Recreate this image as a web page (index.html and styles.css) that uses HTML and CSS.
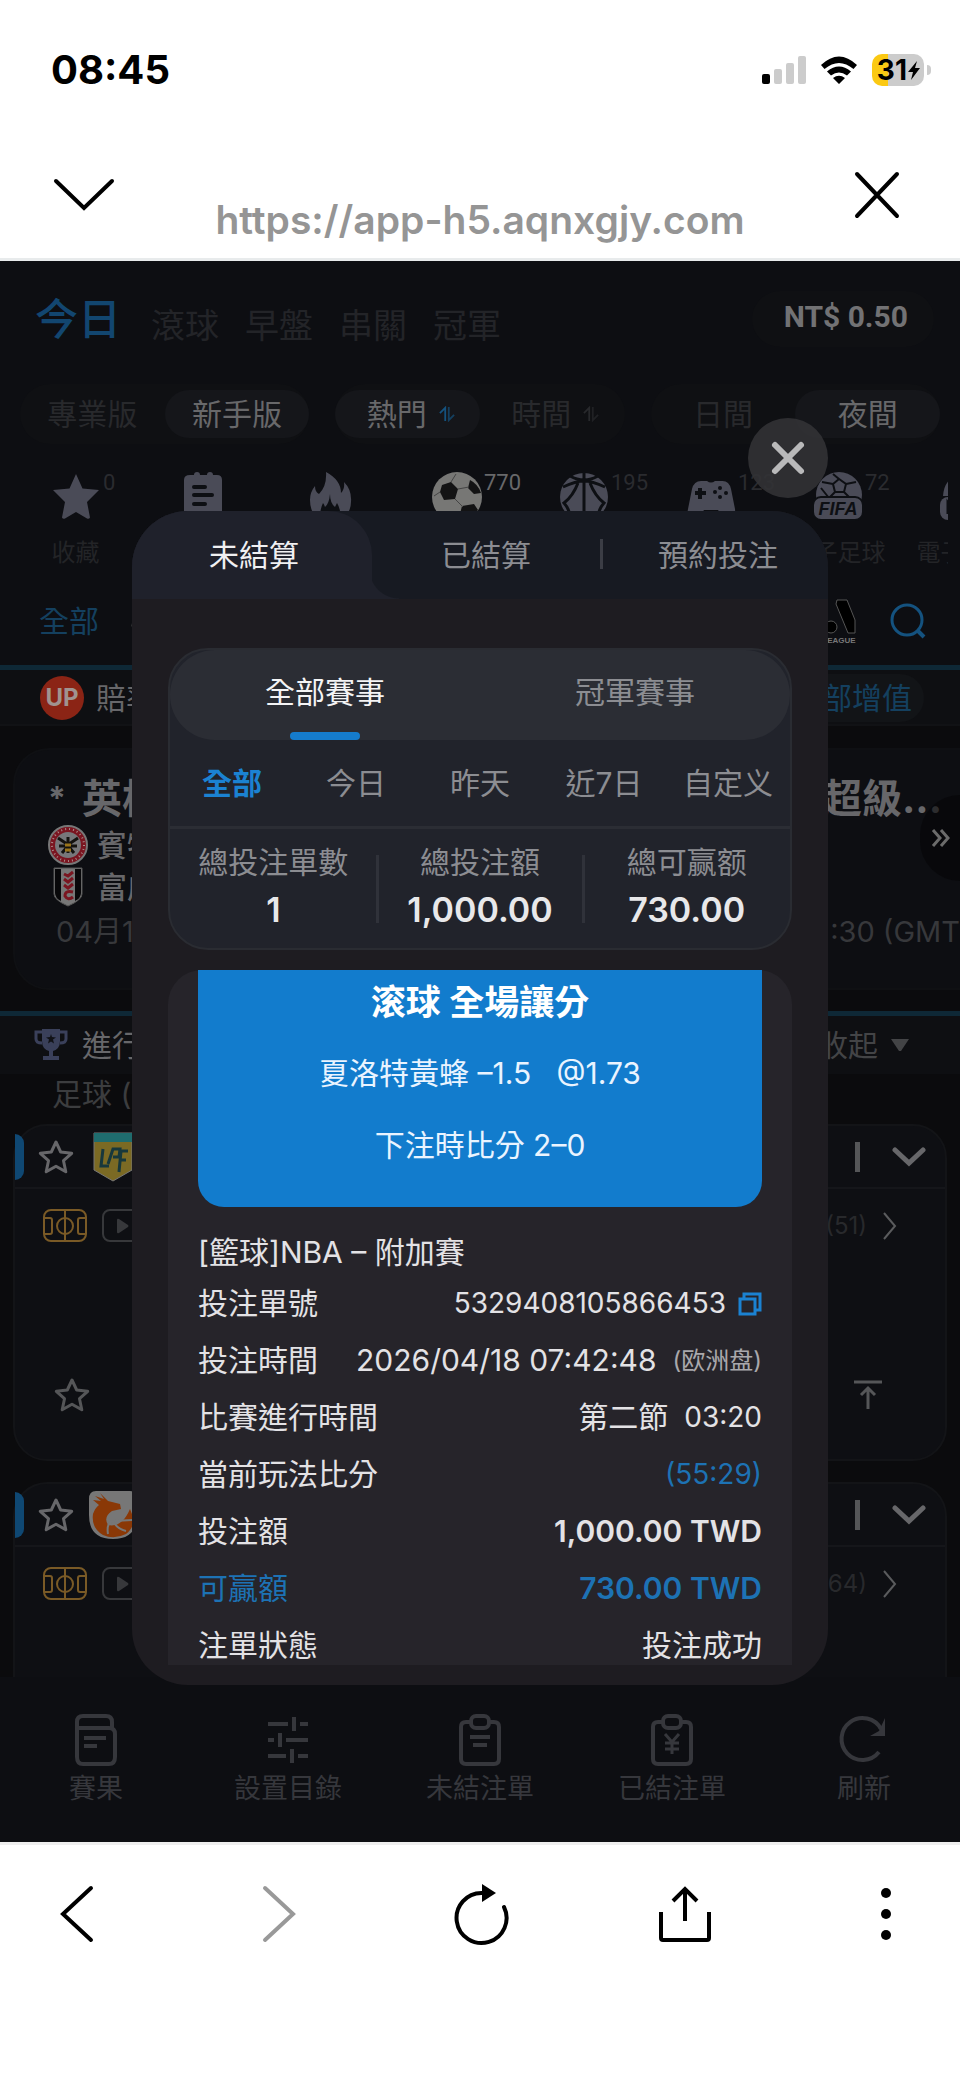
FILE: index.html
```html
<!DOCTYPE html>
<html lang="zh-Hant">
<head>
<meta charset="utf-8">
<meta name="viewport" content="width=device-width, initial-scale=1">
<title>未結注單</title>
<link rel="stylesheet" href="styles.css">
</head>
<body>
<svg class="defs" aria-hidden="true">
  <symbol id="star-line" viewBox="0 0 38 36"><path d="M19 3l4.700 10 11 1.300-8.200 7.400 2.300 11L19 27.200 9.200 32.700l2.300-11L3.300 14.300l11-1.300z" fill="none" stroke="currentColor" stroke-width="3" stroke-linejoin="round"/></symbol>
  <symbol id="pitch" viewBox="0 0 44 34"><g fill="none" stroke="currentColor" stroke-width="2"><rect x="1" y="1" width="42" height="31" rx="7"/><path d="M22 1v31M1 9h6q2 0 2 2v12q0 2-2 2H1M43 9h-6q-2 0-2 2v12q0 2 2 2h6"/><circle cx="22" cy="17" r="8"/></g></symbol>
  <symbol id="play" viewBox="0 0 44 34"><rect x="1" y="1" width="42" height="31" rx="7" fill="none" stroke="currentColor" stroke-width="2"/><path d="M15 11q0-2 2-1l9 6q1 1 0 2l-9 6q-2 1-2-1z" fill="currentColor"/></symbol>
  <symbol id="sort" viewBox="0 0 18 18"><path d="M1 8l6-6v15" fill="none" stroke="currentColor" stroke-width="2"/><path d="M11 1v15l6-6" fill="none" stroke="currentColor" stroke-width="2" opacity=".7"/></symbol>
  <symbol id="down" viewBox="0 0 34 22"><path d="M3 4l14 13L31 4" fill="none" stroke="currentColor" stroke-width="5" stroke-linecap="round"/></symbol>
  <symbol id="next" viewBox="0 0 16 28"><path d="M2 1l11 13L2 27" fill="none" stroke="currentColor" stroke-width="2"/></symbol>
</svg>

<header class="browser-top">
  <div class="status">
    <span class="clock">08:45</span>
    <span class="status-icons">
      <svg width="44" height="28" viewBox="0 0 44 28"><rect y="18" width="8" height="10" rx="2"/><g fill="#ccc"><rect x="12" y="13" width="8" height="15" rx="2"/><rect x="24" y="7" width="8" height="21" rx="2"/><rect x="36" width="8" height="28" rx="2"/></g></svg>
      <svg width="38" height="28" viewBox="0 0 38 28"><path d="M19 28l-6-6q6-4.500 12 0zM1 9l3.500 4q14.500-12 29 0L37 9q-18-17-36 0zM7 15.500l4 4q8-6 16 0l4-4q-12-10-24 0z"/></svg>
      <span class="battery"><b>31</b><svg width="12" height="19" viewBox="0 0 12 19"><path d="M9 0L0 11h5L3 19l9-12H7z"/></svg></span>
    </span>
  </div>
  <div class="address">
    <button class="plain" aria-label="收合"><svg width="62" height="34" viewBox="0 0 62 34"><path d="M3 3l28 27L59 3" fill="none" stroke="#000" stroke-width="4" stroke-linecap="round"/></svg></button>
    <span class="url">https://app-h5.aqnxgjy.com</span>
    <button class="plain" aria-label="關閉"><svg width="48" height="48" viewBox="0 0 48 48"><path d="M4 3l40 42M44 3L4 45" fill="none" stroke="#000" stroke-width="4" stroke-linecap="round"/></svg></button>
  </div>
</header>

<div class="app">
  <main class="page">
    <section class="top">
      <div class="periods">
        <a class="on" href="#">今日</a><a href="#">滾球</a><a href="#">早盤</a><a href="#">串關</a><a href="#">冠軍</a>
        <span class="balance">NT$ 0.50</span>
      </div>
      <div class="switches">
        <div class="switch"><button>專業版</button><button class="on">新手版</button></div>
        <div class="switch sorts"><button class="on">熱門<svg class="blue" width="16" height="16"><use href="#sort"/></svg></button><button>時間<svg width="16" height="16"><use href="#sort"/></svg></button></div>
        <div class="switch"><button>日間</button><button class="on">夜間</button></div>
      </div>
      <div class="sports">
        <a class="sport" href="#"><svg width="48" height="48" viewBox="0 0 48 48"><path d="M24 2l6.500 14.500L47 18 35 30l3 15.500q-1 2-3 1L24 40l-11 6.500q-2 1-3-1L13 30 1 18l16.500-1.500z" fill="currentColor"/></svg><sup>0</sup><span>收藏</span></a>
        <a class="sport" href="#"><svg width="48" height="48" viewBox="0 0 48 48"><path d="M11 3h4q0-3 3-3t3 3h7q0-3 3-3t3 3h4q5 0 5 5v40H5V8q0-5 6-5z" fill="currentColor"/><path d="M15 15h11M15 23h18M15 32h11" stroke="#0d0f13" stroke-width="4" stroke-linecap="round"/></svg></a>
        <a class="sport" href="#"><svg width="48" height="48" viewBox="0 0 48 48"><path d="M20 0q15 8 15 21 4-4 3-11 8 8 7 20 0 11-10 18H15Q4 43 4 28q0-8 5-14 0 6 4 8Q21 14 20 0z" fill="currentColor"/><path d="M24 22q-1 10-5 13-1-3-2-4-4 8-2 17h18q3-9-2-17l-2 4q-5-4-5-13z" fill="#0d0f13"/></svg></a>
        <a class="sport on" href="#"><svg width="50" height="50" viewBox="0 0 50 50"><circle cx="25" cy="25" r="25" fill="#777775"/><g fill="#131314"><path d="M10 13l9-3 7 7-3 10-11 1-4-8zM38 8q8 4 11 13l-7 1-6-6zM30 34l12-2 4 6q-8 11-20 12z"/></g><path d="M26 17l11-2M23 27l8 8M8 20l-6 4M19 10l5-8" stroke="#444" stroke-width="1"/></svg><sup>770</sup></a>
        <a class="sport" href="#"><svg width="48" height="48" viewBox="0 0 48 48"><circle cx="24" cy="25" r="24" fill="currentColor"/><path d="M24 0v48M10 4q14 8 28 0M3 15q13-6 21-6t21 6M18 11Q13 24 4 31q7 8 6 17M30 11q5 13 14 20-7 8-6 17" fill="none" stroke="#0d0f13" stroke-width="3"/></svg><sup>195</sup></a>
        <a class="sport" href="#"><svg width="48" height="48" viewBox="0 0 48 48"><path d="M14 9h6q4 3 8 0h6q8-1 10 8l4 20q1 9-7 9-5 0-10-8H17q-5 8-10 8-8 0-6-9l4-20q2-8 9-8z" fill="currentColor"/><path d="M13 16v11M8 21h11" stroke="#0d0f13" stroke-width="4"/><g fill="#0d0f13"><circle cx="33" cy="16" r="2"/><circle cx="33" cy="25" r="2"/><circle cx="28" cy="20" r="2"/><circle cx="39" cy="21" r="2"/></g></svg><sup>123</sup></a>
        <a class="sport" href="#"><svg width="50" height="48" viewBox="0 0 50 48"><circle cx="26" cy="23" r="23" fill="currentColor"/><path d="M20 12l6-5 7 5-2 8h-9zM26 7l-6-5M33 12l10-2M31 20l6 6M22 20l-6 6M20 12L9 10M8 16l8 10" fill="none" stroke="#0d0f13" stroke-width="2"/><rect x="0" y="25" width="50" height="23" rx="8" fill="currentColor" stroke="#0d0f13" stroke-width="2"/><text x="25" y="43" text-anchor="middle" class="fifa">FIFA</text></svg><sup>72</sup><span>電子足球</span></a>
        <a class="sport" href="#"><svg width="50" height="48" viewBox="0 0 50 48"><path d="M3 24Q4 8 18 2v22z" fill="currentColor"/><rect x="0" y="25" width="50" height="23" rx="8" fill="currentColor"/><path d="M8 42V31l8 11V31" fill="none" stroke="#0d0f13" stroke-width="3"/></svg><span>電子籃球</span></a>
      </div>
      <div class="leagues">
        <a class="all" href="#">全部</a>
        <svg class="league-cut" width="12" height="22" viewBox="0 0 12 22"><path d="M8 1L3 10l-1 6 3 5M9 8l-3 8" fill="none" stroke="#555" stroke-width="1"/></svg>
        <svg class="a-league" width="40" height="46" viewBox="0 0 40 46"><path d="M20 2h10l8 20v13h-7L19 6z" fill="#000" stroke="#555"/><circle cx="14" cy="29" r="6" fill="#000" stroke="#555"/><text x="22" y="45" text-anchor="middle" class="league-name">LEAGUE</text></svg>
        <button class="plain" aria-label="搜尋"><svg width="36" height="36" viewBox="0 0 36 36"><circle cx="17" cy="17" r="15" fill="none" stroke="#14527f" stroke-width="3"/><path d="M27 27l7 7" stroke="#14527f" stroke-width="4"/></svg></button>
      </div>
    </section>
    <section class="promo">
      <span class="up">UP</span><span>賠率</span>
      <button class="boost">全部增值</button>
    </section>
    <section class="feature">
      <div class="spread headline"><span><i>*</i>英格</span><span>超級...</span></div>
      <div class="team"><svg width="40" height="40" viewBox="0 0 40 40"><circle cx="20" cy="20" r="19" fill="#7a1520" stroke="#777" stroke-width="2"/><circle cx="20" cy="20" r="13" fill="#77777a"/><path d="M20 12v16M10 13l9 6M30 13l-9 6M11 21h18M14 28l5-6M26 28l-5-6" stroke="#14120f" stroke-width="3"/><path d="M17 20h6M17 25h6" stroke="#9a741b" stroke-width="3"/><circle cx="20" cy="20" r="16" fill="none" stroke="#aa8a8a" stroke-width="2" stroke-dasharray="1 3"/></svg>賓特</div>
      <div class="team"><svg width="40" height="40" viewBox="0 0 40 40"><path d="M6 1h28v26q0 6-14 12Q6 33 6 27z" fill="#777" stroke="#555"/><path d="M7 2h6v32q-6-3-6-8zM27 2h6v24q0 5-6 8z" fill="#08080a"/><path d="M25 5l-5 4-4-2M25 11l-5 4-4-3M25 17l-5 4-4-3M25 25q-8-2-8 4 3 5 8 1" fill="none" stroke="#7a1520" stroke-width="3"/></svg>富咸</div>
      <div class="spread when"><span>04月1</span><span>:30 (GMT</span></div>
      <button class="drawer" aria-label="展開"><svg width="20" height="18" viewBox="0 0 20 18"><path d="M2 1l7 8-7 8M10 1l7 8-7 8" fill="none" stroke="#6b6b6b" stroke-width="3"/></svg></button>
    </section>
    <section class="live">
      <div class="live-head">
        <svg width="34" height="34" viewBox="0 0 34 34"><path d="M8 1h18v12q0 8-7 10v5h6v4H9v-4h6v-5q-7-2-7-10z" fill="#3a405a"/><path d="M8 4H2v7q0 4 6 4M26 4h6v7q0 4-6 4" fill="none" stroke="#3a405a" stroke-width="3"/><path d="M17 6l1 3 4 .500-3 2 1 4-3-2-3 2 1-4-3-2 4-.500z" fill="#111217"/></svg>
        <span>進行</span>
        <button class="fold">收起<svg width="20" height="14" viewBox="0 0 20 14"><path d="M1 1h18L11 13H9z" fill="currentColor"/></svg></button>
      </div>
      <h2 class="kind">足球 (</h2>
      <article class="match">
        <header class="match-head"><svg class="star" width="38" height="36"><use href="#star-line"/></svg>
          <svg width="40" height="50" viewBox="0 0 40 50"><path d="M1 1h38v37L20 49 1 38z" fill="#7b6a24" stroke="#777"/><path d="M1 1h38v9H1z" fill="#1f6c6e"/><path d="M10 17l-2 17h8M15 32l5-15h7l-1 8h-6M26 40l2-21h7M27 28h6" fill="none" stroke="#17383c" stroke-width="3"/></svg>
          <span class="rule"></span><svg width="34" height="22"><use href="#down"/></svg></header>
        <div class="match-row"><svg class="gold" width="44" height="34"><use href="#pitch"/></svg><svg width="44" height="34"><use href="#play"/></svg><span class="more">(51)</span><svg class="go" width="16" height="28"><use href="#next"/></svg></div>
        <div class="match-foot"><svg width="38" height="36"><use href="#star-line"/></svg><svg width="30" height="30" viewBox="0 0 30 30"><path d="M1 2h28M15 29V9M8 15l7-7 7 7" fill="none" stroke="currentColor" stroke-width="3"/></svg></div>
      </article>
      <article class="match cut">
        <header class="match-head"><svg class="star" width="38" height="36"><use href="#star-line"/></svg>
          <svg class="wide-badge" width="50" height="50" viewBox="0 0 50 50"><path d="M8 1h34q8 0 7 8v16q0 24-24 24T1 25V9q0-8 7-8z" fill="#777"/><path d="M5 10l8 1-6-5 9 3-4-6 8 8 12 3 1 5-9 2q-9 6-4 14 14 3 22-16 8 16-4 25-12 6-23 1Q3 38 5 24q2-6 6-9z" fill="#8a3806"/><path d="M20 44q-2-12 6-13l18-1M25 31q4 8 13 10" fill="none" stroke="#777" stroke-width="2"/></svg>
          <span class="rule"></span><svg width="34" height="22"><use href="#down"/></svg></header>
        <div class="match-row"><svg class="gold" width="44" height="34"><use href="#pitch"/></svg><svg width="44" height="34"><use href="#play"/></svg><span class="more">(64)</span><svg class="go" width="16" height="28"><use href="#next"/></svg></div>
      </article>
    </section>
    <nav class="dock">
      <a href="#"><svg width="44" height="52" viewBox="0 0 44 52"><g fill="none" stroke="currentColor" stroke-width="4"><path d="M38 14V8q0-6-6-6H9q-6 0-6 6v35q0 7 6 7h26q6 0 6-7V20q0-6-6-6H4"/><path d="M10 24h22M10 32h13"/></g></svg>賽果</a>
      <a href="#"><svg width="44" height="52" viewBox="0 0 44 52"><path d="M2 10h20M34 10h8M2 26h6M20 26h22M2 42h18M32 42h10M28 3v14M14 19v14M26 35v14" fill="none" stroke="currentColor" stroke-width="4"/></svg>設置目錄</a>
      <a href="#"><svg width="44" height="52" viewBox="0 0 44 52"><g fill="none" stroke="currentColor" stroke-width="4"><path d="M13 8H8q-5 0-5 5v32q0 5 5 5h28q5 0 5-5V13q0-5-5-5h-5"/><rect x="13" y="2" width="18" height="12" rx="5"/><path d="M12 23h20M15 31h14"/></g></svg>未結注單</a>
      <a href="#"><svg width="44" height="52" viewBox="0 0 44 52"><g fill="none" stroke="currentColor" stroke-width="4"><path d="M13 8H8q-5 0-5 5v32q0 5 5 5h28q5 0 5-5V13q0-5-5-5h-5"/><rect x="13" y="2" width="18" height="12" rx="5"/><path d="M15 20l7 8 7-8M22 28v12M15 29h14M15 35h14" stroke-width="3"/></g></svg>已結注單</a>
      <a href="#"><svg width="50" height="52" viewBox="0 0 50 52"><path d="M40 38A21 21 0 1 1 42 15" fill="none" stroke="currentColor" stroke-width="4"/><path d="M46 4v18H31l9-5z" fill="currentColor"/></svg>刷新</a>
    </nav>
  </main>

  <div class="overlay">
    <button class="close" aria-label="關閉"><svg width="34" height="34" viewBox="0 0 34 34"><path d="M4 4l26 26M30 4L4 30" stroke="#b9b9ba" stroke-width="6" stroke-linecap="round"/></svg></button>
    <section class="dialog" role="dialog" aria-label="注單">
      <nav class="tabs"><button class="on">未結算</button><button>已結算</button><button>預約投注</button></nav>
      <div class="dialog-body">
        <section class="summary">
          <div class="events"><button class="on">全部賽事</button><button>冠軍賽事</button></div>
          <div class="ranges"><button class="on">全部</button><button>今日</button><button>昨天</button><button>近7日</button><button>自定义</button></div>
          <dl class="stats">
            <div><dt>總投注單數</dt><dd>1</dd></div>
            <div><dt>總投注額</dt><dd>1,000.00</dd></div>
            <div><dt>總可赢额</dt><dd>730.00</dd></div>
          </dl>
        </section>
        <section class="ticket">
          <div class="pick">
            <h3>滚球 全場讓分</h3>
            <p>夏洛特黃蜂 –1.5 &nbsp; @1.73</p>
            <p>下注時比分 2–0</p>
          </div>
          <h4>[籃球]NBA – 附加賽</h4>
          <dl class="details">
            <div><dt>投注單號</dt><dd><span class="serial">5329408105866453</span><button class="plain copy" aria-label="複製"><svg width="24" height="24" viewBox="0 0 24 24"><path d="M2 7h15v15H2zM6 6V2h16v16h-4" fill="none" stroke="#1b82d2" stroke-width="3"/></svg></button></dd></div>
            <div><dt>投注時間</dt><dd><span>2026/04/18 07:42:48</span><small>(欧洲盘)</small></dd></div>
            <div><dt>比賽進行時間</dt><dd><span>第二節</span><span class="serial clock-gap">03:20</span></dd></div>
            <div><dt>當前玩法比分</dt><dd class="win"><span class="serial">(55:29)</span></dd></div>
            <div><dt>投注額</dt><dd class="strong">1,000.00 TWD</dd></div>
            <div class="win"><dt>可贏額</dt><dd class="strong">730.00 TWD</dd></div>
            <div><dt>注單狀態</dt><dd>投注成功</dd></div>
          </dl>
        </section>
      </div>
    </section>
  </div>
</div>

<footer class="browser-bottom">
  <button class="plain" aria-label="上一頁"><svg width="36" height="58" viewBox="0 0 36 58"><path d="M32 3L4 29l28 26" fill="none" stroke="#000" stroke-width="4" stroke-linecap="round"/></svg></button>
  <button class="plain" aria-label="下一頁"><svg width="36" height="58" viewBox="0 0 36 58"><path d="M4 3l28 26L4 55" fill="none" stroke="#999" stroke-width="4" stroke-linecap="round"/></svg></button>
  <button class="plain" aria-label="重新整理"><svg width="56" height="62" viewBox="0 0 56 62"><path d="M50 24a25 25 0 1 1-22-14" fill="none" stroke="#000" stroke-width="4" stroke-linecap="round"/><path d="M28 1l14 9-14 9z"/></svg></button>
  <button class="plain" aria-label="分享"><svg width="54" height="58" viewBox="0 0 54 58"><path d="M3 27v26q0 2 2 2h44q2 0 2-2V27M27 36V4M15 16L27 4l12 12" fill="none" stroke="#000" stroke-width="4"/></svg></button>
  <button class="plain" aria-label="更多"><svg width="12" height="54" viewBox="0 0 12 54"><circle cx="6" cy="6" r="5"/><circle cx="6" cy="27" r="5"/><circle cx="6" cy="48" r="5"/></svg></button>
</footer>
</body>
</html>
```
FILE: styles.css
```css
* { box-sizing: border-box; }
body {
  margin: 0;
  background: #fff;
  font-family: Inter, "Noto Sans CJK TC", sans-serif;
  font-size: 30px;
  line-height: 40px;
}
button { font: inherit; color: inherit; border: 0; padding: 0; background: none; }
a { color: inherit; text-decoration: none; }
svg { flex: none; display: block; overflow: visible; }
h2, h3, h4, p, dl, dd { margin: 0; }
.defs { position: absolute; width: 0; height: 0; }
.plain { display: flex; }

/* browser chrome */
.browser-top { border-bottom: 3px solid #e8ebec; }
.status { display: flex; justify-content: space-between; align-items: center; padding: 46px 30px 0 51px; line-height: 48px; }
.clock { font-size: 40px; font-weight: 700; }
.status-icons { display: flex; align-items: center; gap: 14px; }
.battery { position: relative; display: flex; align-items: center; gap: 1px; height: 32px; padding: 0 4px 0 5px; margin-right: 6px; border-radius: 10px; background: linear-gradient(90deg, #fbc913 31%, #ccc 31%); font-size: 28px; }
.battery::after { content: ""; position: absolute; left: 100%; top: 11px; width: 4px; height: 10px; margin-left: 3px; border-radius: 0 4px 4px 0; background: #ccc; }
.address { display: flex; justify-content: space-between; align-items: center; padding: 72px 59px 0 53px; min-height: 164px; }
.address .plain { margin-bottom: 34px; }
.url { color: #959595; font-size: 39px; font-weight: 600; line-height: 48px; margin: 16px 8px 0 0; }
.browser-bottom { display: grid; grid-template-columns: 153px 1fr 154px 1fr 149px; align-items: center; justify-items: center; min-height: 237px; border-top: 3px solid #eee; padding-bottom: 97px; }

/* dimmed page */
.app { position: relative; background: #0b0b0d; color: #67676a; overflow: hidden; }
.top { background: #0d0e12; border-bottom: 5px solid #0e2836; }
.periods { display: flex; align-items: center; gap: 26px; padding: 28px 26px 0 35px; min-height: 88px; font-size: 34px; color: #232428; }
.periods a { padding-top: 14px; }
.periods .on { font-size: 43px; font-weight: 500; color: #124670; padding: 0 4px 0 0; }
.balance { margin-left: auto; padding: 6px 26px 10px 32px; border-radius: 28px; background: #0f1013; color: #727274; font-family: Roboto, sans-serif; font-size: 30px; font-weight: 700; }
.switches { display: grid; grid-template-columns: repeat(3, 1fr); gap: 26px; padding: 35px 20px 0; }
.switch { display: grid; grid-template-columns: 1fr 1fr; align-items: center; padding: 6px 0; border-radius: 30px; background: #0f1013; color: #28292c; }
.switch button { display: flex; align-items: center; justify-content: center; gap: 12px; line-height: 48px; border-radius: 24px; white-space: nowrap; }
.sorts button { padding-left: 6px; }
.switch .on { background: #15161a; color: #68686a; }
.switch .blue { color: #14527f; }
.sports { display: grid; grid-template-columns: repeat(8, 127px); margin: 0 12px; padding-top: 28px; overflow: hidden; color: #4a4b57; }
.sport { position: relative; display: flex; flex-direction: column; align-items: center; gap: 14px; min-height: 105px; font-size: 24px; white-space: nowrap; line-height: 34px; }
.sport sup { position: absolute; left: 91px; top: 0; color: #2a2b2f; font-family: Roboto, sans-serif; font-size: 22px; line-height: 22px; }
.sport span { color: #232427; margin-top: 2px; }
.sport.on sup { color: #68686a; }
.fifa { font: italic 700 18px "Liberation Sans", sans-serif; fill: #0d0f13; }
.league-name { font: 700 8px "Liberation Sans", sans-serif; fill: #777; }
.leagues { display: flex; align-items: center; padding: 0 34px 0 39px; min-height: 88px; }
.all { color: #14405f; }
.league-cut { margin-left: 31px; }
.a-league { margin: 0 33px 0 auto; }
.promo { display: flex; align-items: center; gap: 12px; padding: 4px 36px 2px 40px; background: #0e0f12; border-bottom: 2px solid #111215; }
.up { flex: none; width: 44px; height: 44px; border-radius: 50%; background: #8b2415; color: #a0938f; font-size: 24px; font-weight: 700; line-height: 44px; text-align: center; }
.boost { margin-left: auto; padding: 0 12px 0 30px; line-height: 48px; border-radius: 24px; background: #121417; color: #14405f; }
.feature { position: relative; margin: 22px 0 21px 13px; padding: 24px 0 32px 33px; border: 2px solid #0f1013; border-right: 0; border-radius: 36px 0 0 36px; background: #0d0e12; white-space: nowrap; }
.spread { display: flex; justify-content: space-between; }
.headline { font-size: 40px; font-weight: 700; line-height: 50px; padding-right: 18px; }
.headline span { display: flex; }
.headline i { font-style: normal; font-size: 32px; padding-right: 16px; }
.team { display: flex; align-items: center; gap: 9px; line-height: 42px; font-weight: 500; }
.when { color: #37383b; line-height: 48px; padding-left: 8px; font-size: 29px; }
.drawer { position: absolute; right: 0; top: 45px; width: 40px; padding: 34px 0 34px 11px; border-radius: 43px 0 0 43px; background: rgba(5, 5, 7, .6); }
.live-head { display: flex; align-items: center; gap: 14px; padding: 0 50px 0 34px; line-height: 58px; border-top: 5px solid #0e2836; background: #0e0f12; }
.fold { display: flex; align-items: center; gap: 12px; margin-left: auto; color: #434446; }
.kind { padding-left: 52px; font-size: 30px; font-weight: 400; line-height: 40px; color: #3c3d3f; }
.match { margin: 10px 13px 21px; border: 2px solid #131417; border-radius: 34px; background: #0e0f13; }
.match.cut { margin-bottom: 0; min-height: 195px; border-bottom: 0; border-radius: 34px 34px 0 0; }
.match-head { position: relative; display: flex; align-items: center; gap: 18px; min-height: 63px; padding: 0 19px 0 22px; border-bottom: 2px solid #15161a; }
.match-head::before { content: ""; position: absolute; left: 0; top: 8px; width: 9px; height: 46px; border-radius: 0 9px 9px 0; background: #0f4873; }
.match-head .rule { width: 5px; height: 30px; margin: 0 14px 0 auto; background: #555658; }
.match-head .wide-badge { margin-left: -5px; }
.match-row { display: flex; align-items: center; gap: 15px; padding: 17px 47px 15px 28px; color: #37383b; }
.gold { color: #7a5a26; }
.more { margin-left: auto; font-size: 24px; color: #28292c; }
.go { color: #5a5b5d; }
.match-foot { display: flex; justify-content: space-between; align-items: center; padding: 116px 62px 46px 38px; color: #555658; }
.dock { display: grid; grid-template-columns: repeat(5, 1fr); padding: 37px 0 34px; background: #0d0e12; color: #36373c; min-height: 165px; }
.dock a { display: flex; flex-direction: column; align-items: center; gap: 4px; font-size: 27px; line-height: 38px; }

/* bet dialog */
.overlay { position: absolute; inset: 157px 132px auto; display: flex; flex-direction: column; align-items: flex-end; gap: 13px; }
.close { display: grid; place-items: center; width: 80px; height: 80px; border-radius: 50%; background: rgba(50, 50, 53, .9); }
.dialog { width: 100%; border-radius: 56px; overflow: hidden; background: #1e1c21; color: #e3e2e5; }
.tabs { position: relative; display: grid; grid-template-columns: repeat(3, 1fr); background: #171a22; color: #8c8d92; }
.tabs::before { content: ""; position: absolute; left: 34%; bottom: 0; width: 30px; height: 30px; background: radial-gradient(circle at 100% 0, transparent 29px, #1f212b 30px); }
.tabs button { position: relative; padding-left: 12px; line-height: 88px; }
.tabs .on { color: #f0f0f2; z-index: 1; }
.tabs .on::before { content: ""; position: absolute; inset: 0 -8px 0 0; z-index: -1; border-top-right-radius: 44px; background: #1f212b; }
.tabs button + button + button::before { content: ""; position: absolute; left: 4px; top: 28px; width: 3px; height: 30px; background: #3b3d45; }
.dialog-body { padding: 49px 36px 20px; }
.summary { border: 2px solid #2a2c32; border-radius: 40px; background: #21232b; color: #8c8d92; overflow: hidden; }
.events { display: grid; grid-template-columns: 1fr 1fr; border-radius: 46px; background: #2b2d34; }
.events button { position: relative; line-height: 84px; padding-bottom: 6px; }
.events .on { color: #f4f4f5; }
.events .on::after { content: ""; position: absolute; left: 50%; bottom: 0; width: 70px; height: 8px; margin-left: -35px; border-radius: 4px; background: #157ccd; }
.ranges { display: grid; grid-template-columns: repeat(5, 1fr); line-height: 86px; border-bottom: 3px solid #2b2d34; }
.ranges .on { color: #1b82d2; font-weight: 700; }
.stats { display: grid; grid-template-columns: repeat(3, 1fr); padding: 10px 0 13px; text-align: center; }
.stats div { position: relative; }
.stats div + div::before { content: ""; position: absolute; left: -1px; top: 16px; width: 3px; height: 68px; background: #30323a; }
.stats dt { line-height: 46px; }
.stats dd { color: #e8e8ea; font-size: 34px; font-weight: 600; line-height: 50px; }
.ticket { margin-top: 20px; padding: 0 30px; border-radius: 34px 34px 0 0; background: #26242a; }
.pick { padding: 6px 0 26px; border-radius: 0 0 26px 26px; background: #127ccd; color: #eaf4ff; text-align: center; }
.pick h3 { color: #fff; font-size: 35px; font-weight: 700; line-height: 52px; padding-bottom: 9px; }
.pick p { line-height: 72px; }
.ticket h4 { padding-top: 22px; font-size: 30px; font-weight: 400; line-height: 46px; }
.details { display: flow-root; }
.details div { display: flex; justify-content: space-between; line-height: 57px; }
.details div:last-child { margin-bottom: -9px; }
.details dd { display: flex; align-items: center; }
.details small { margin-left: 16px; font-size: 24px; color: #a9a8ac; }
.details .win { color: #1d72b4; }
.details .strong { font-weight: 600; }
.serial { font-size: 28px; }
.copy { margin-left: 12px; }
.clock-gap { margin-left: 16px; }
```
